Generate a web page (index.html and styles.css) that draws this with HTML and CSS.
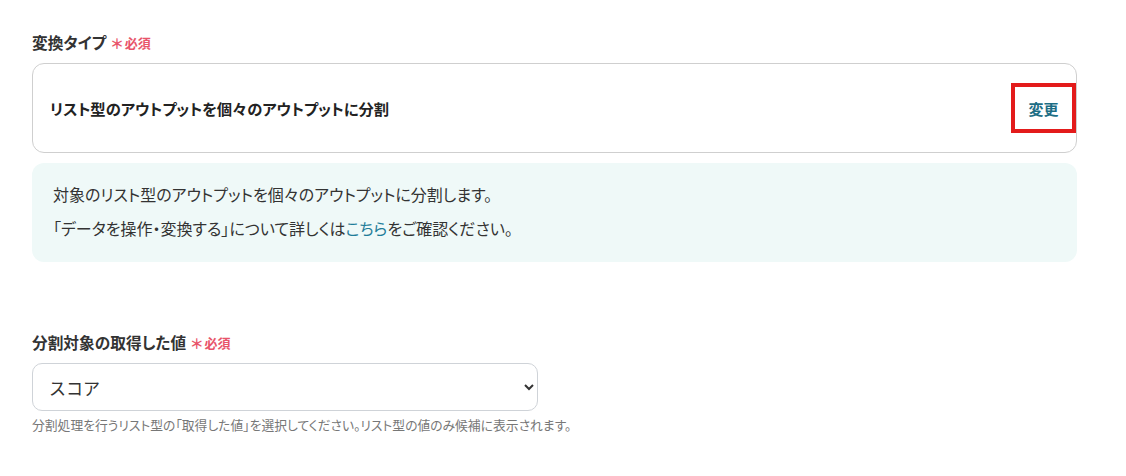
FILE: index.html
```html
<!DOCTYPE html>
<html lang="ja">
<head>
<meta charset="utf-8">
<title>変換タイプ</title>
<link rel="stylesheet" href="styles.css">
</head>
<body>
<div class="page">
  <section class="field">
    <div class="label">変換タイプ<span class="req"><span class="ast">＊</span>必須</span></div>
    <div class="card">
      <span class="card-title">リスト型のアウトプットを個々のアウトプットに分割</span>
      <button class="change">変更</button>
    </div>
    <div class="info">
      <p>対象のリスト型のアウトプットを個々のアウトプットに分割します。</p>
      <p>「データを操作・変換する」について詳しくは<a class="link" href="#">こちら</a>をご確認ください。</p>
    </div>
  </section>
  <section class="field field2">
    <div class="label">分割対象の取得した値<span class="req"><span class="ast">＊</span>必須</span></div>
    <select class="select">
      <option>スコア</option>
    </select>
    <div class="help">分割処理を行うリスト型の「取得した値」を選択してください。リスト型の値のみ候補に表示されます。</div>
  </section>
</div>
</body>
</html>
```

FILE: styles.css
```css
html, body {
  margin: 0;
  padding: 0;
  background: #fff;
}
body {
  font-family: "Noto Sans CJK JP", "Noto Sans", sans-serif;
  font-feature-settings: "palt";
  color: #333;
}
.page {
  padding: 33px 0 0 32px;
  width: 1045px;
}
.label {
  font-size: 15.7px;
  font-weight: 700;
  line-height: 20px;
  color: #333;
  display: flex;
  align-items: center;
}
.req {
  color: #e8546a;
  font-size: 13px;
  font-weight: 700;
  margin-left: 5px;
  display: inline-flex;
  align-items: center;
}
.ast {
  font-size: 14px;
  margin-right: 2px;
}
.card {
  margin-top: 10px;
  height: 88px;
  border: 1px solid #cfcfcf;
  border-radius: 12px;
  display: flex;
  align-items: center;
  justify-content: space-between;
  padding: 0 0 0 17px;
}
.card-title {
  font-size: 15.3px;
  font-weight: 700;
  color: #222;
}
.change {
  font-family: inherit;
  font-feature-settings: "palt";
  width: 65px;
  height: 50px;
  border: 4px solid #e31b1b;
  background: #fff;
  color: #1d6e85;
  font-size: 15px;
  font-weight: 700;
  padding: 0;
  margin-right: 0;
  box-sizing: border-box;
}
.info {
  margin-top: 10px;
  background: #eff9f8;
  border-radius: 12px;
  padding: 14px 21px 17px;
}
.info p {
  margin: 0;
  font-size: 16px;
  line-height: 34px;
  color: #333;
}
.link {
  color: #1f7d9a;
  text-decoration: none;
}
.field2 {
  margin-top: 71px;
}
.select {
  display: block;
  margin-top: 10px;
  width: 506px;
  height: 48px;
  border: 1px solid #cfd3d8;
  border-radius: 10px;
  background: #fff;
  font-family: inherit;
  font-size: 17px;
  color: #333;
  padding: 0 10px 0 12px;
}
.help {
  margin-top: 6px;
  font-size: 12.8px;
  line-height: 16px;
  color: #777;
}
```
